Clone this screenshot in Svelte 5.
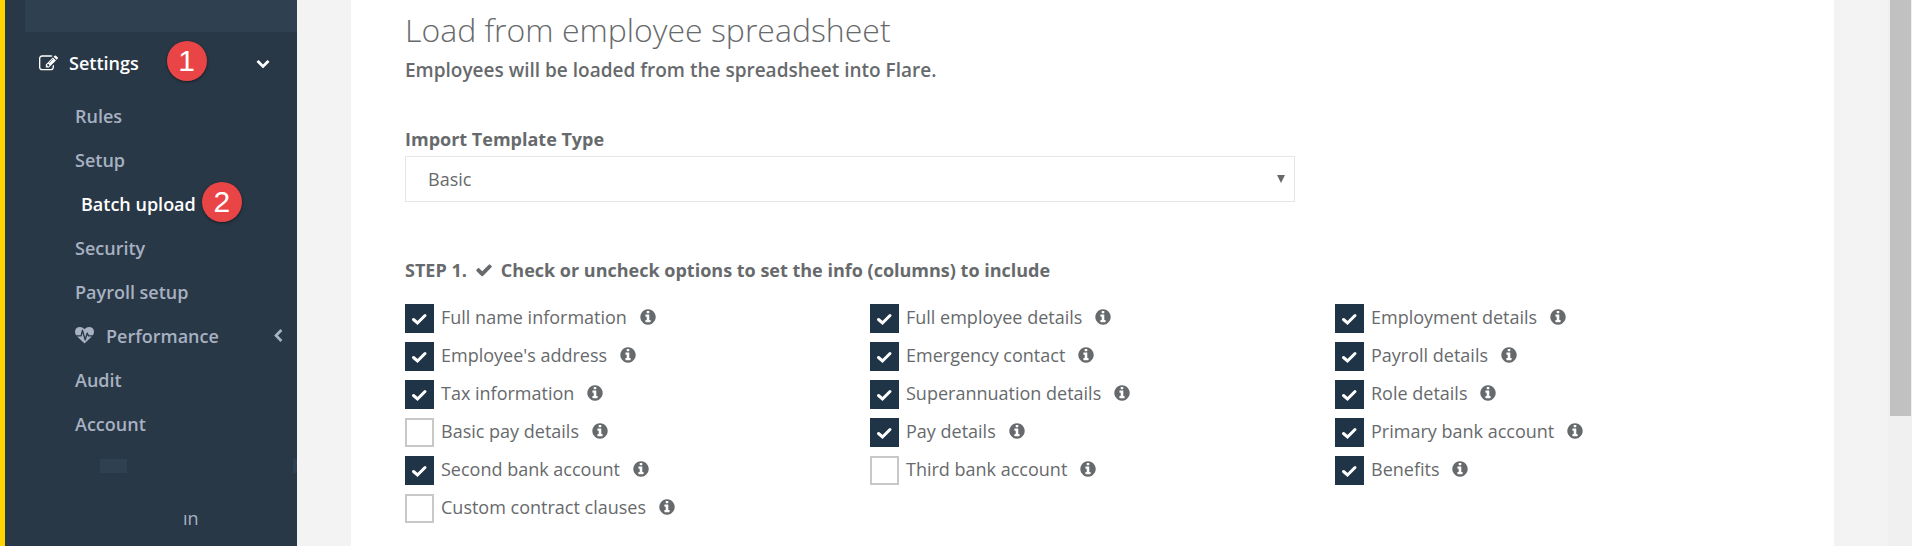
<script>
  const icons = {
    edit:
      "M888 1184l116-116-152-152-116 116v56h96v96h56zm440-720q-16-16-33 1l-350 350q-17 17-1 33t33-1l350-350q17-17 1-33zm80 594v190q0 119-84.5 203.5t-203.5 84.5h-832q-119 0-203.5-84.5t-84.5-203.5v-832q0-119 84.5-203.5t203.5-84.5h832q63 0 117 25 15 7 18 23 3 17-9 29l-49 49q-14 14-32 8-23-6-45-6h-832q-66 0-113 47t-47 113v832q0 66 47 113t113 47h832q66 0 113-47t47-113v-126q0-13 9-22l64-64q15-15 35-7t20 29zm-96-738l288 288-672 672h-288v-288zm444 132l-92 92-288-288 92-92q28-28 68-28t68 28l152 152q28 28 28 68t-28 68z",
    heart:
      "M1280 896h305q-5 6-10 10.5t-9 7.5l-3 4-623 600q-18 18-44 18t-44-18l-624-602q-5-2-21-20h369q22 0 39.5-13.5t22.5-34.5l70-281 190 667q6 20 23 33t39 13q21 0 38-13t23-33l146-485 56 112q18 35 57 35zm512-428q0 145-103 300h-369l-111-221q-8-17-25.5-27t-36.5-8q-45 5-56 46l-129 430-196-686q-6-20-23.5-33t-39.5-13-39 13.5-22 34.5l-116 464h-423q-103-155-103-300 0-220 127-344t351-124q62 0 126.5 21.5t120 58 95.5 68.5 76 68q36-36 76-68t95.5-68.5 120-58 126.5-21.5q224 0 351 124t127 344z",
    down:
      "M1683 808l-742 741q-19 19-45 19t-45-19l-742-741q-19-19-19-45.5t19-45.5l166-165q19-19 45-19t45 19l531 531 531-531q19-19 45-19t45 19l166 165q19 19 19 45.5t-19 45.5z",
    left:
      "M1427 301l-531 531 531 531q19 19 19 45t-19 45l-166 166q-19 19-45 19t-45-19l-742-742q-19-19-19-45t19-45l742-742q19-19 45-19t45 19l166 166q19 19 19 45t-19 45z",
    check:
      "M1671 566q0 40-28 68l-724 724-136 136q-28 28-68 28t-68-28l-136-136-362-362q-28-28-28-68t28-68l136-136q28-28 68-28t68 28l294 295 656-657q28-28 68-28t68 28l136 136q28 28 28 68z",
    info:
      "M1152 1376v-160q0-14-9-23t-23-9h-96v-512q0-14-9-23t-23-9h-320q-14 0-23 9t-9 23v160q0 14 9 23t23 9h96v320h-96q-14 0-23 9t-9 23v160q0 14 9 23t23 9h448q14 0 23-9t9-23zm-128-896v-160q0-14-9-23t-23-9h-192q-14 0-23 9t-9 23v160q0 14 9 23t23 9h192q14 0 23-9t9-23zm640 416q0 209-103 385.5t-279.5 279.5-385.5 103-385.5-103-279.5-279.5-103-385.5 103-385.5 279.5-279.5 385.5-103 385.5 103 279.5 279.5 103 385.5z"
  };

  const links = [
    { text: "Rules" },
    { text: "Setup" },
    { text: "Batch upload", active: true, badge: 2 },
    { text: "Security" },
    { text: "Payroll setup" },
    { text: "Performance", icon: "heart", more: true },
    { text: "Audit" },
    { text: "Account" }
  ];

  let template = "Basic";

  // read row by row, three per row
  let options = [
    { text: "Full name information", checked: true },
    { text: "Full employee details", checked: true },
    { text: "Employment details", checked: true },
    { text: "Employee's address", checked: true },
    { text: "Emergency contact", checked: true },
    { text: "Payroll details", checked: true },
    { text: "Tax information", checked: true },
    { text: "Superannuation details", checked: true },
    { text: "Role details", checked: true },
    { text: "Basic pay details", checked: false },
    { text: "Pay details", checked: true },
    { text: "Primary bank account", checked: true },
    { text: "Second bank account", checked: true },
    { text: "Third bank account", checked: false },
    { text: "Benefits", checked: true },
    { text: "Custom contract clauses", checked: false }
  ];
</script>

<style>
  :global(body) {
    background: #f3f3f4;
  }

  .page {
    display: flex;
    min-height: 100vh;
    box-sizing: border-box;
    border-left: 5px solid #ffd400;
    font-family: "Open Sans", sans-serif;
    font-size: 18px;
    line-height: 24px;
    color: #676a6c;
  }

  svg {
    display: block;
    flex: none;
    width: 18px;
    height: 18px;
    fill: currentColor;
  }

  /* sidebar */
  nav {
    flex: none;
    width: 292px;
    background: #293846;
    color: #a7b1c2;
    font-weight: 600;
  }
  .previous {
    height: 32px;
    margin-left: 20px;
    background: #2f4050;
  }
  nav a {
    display: flex;
    align-items: center;
    color: inherit;
    text-decoration: none;
  }
  .parent {
    height: 62px;
    padding: 0 27px 0 34px;
    color: #fff;
  }
  .parent svg {
    width: 19px;
    height: 19px;
    margin-right: 11px;
  }
  nav ul {
    margin: 0;
    padding: 0;
    list-style: none;
  }
  li a {
    height: 44px;
    padding: 0 12px 0 70px;
  }
  li a.active {
    padding-left: 76px;
    color: #fff;
  }
  li svg {
    width: 19px;
    height: 19px;
    margin-right: 12px;
  }
  nav .arrow {
    width: 14px;
    height: 14px;
    margin: 0 0 0 auto;
  }
  .anchor {
    position: relative;
  }
  .badge {
    position: absolute;
    top: 50%;
    left: 100%;
    width: 40px;
    height: 40px;
    margin: -22px 0 0 6px;
    border-radius: 50%;
    background: #e94547;
    box-shadow: 0 1px 3px rgba(0, 0, 0, 0.5);
    color: #fff;
    font: 30px/40px "Liberation Sans", sans-serif;
    text-align: center;
  }
  .parent .badge {
    margin-left: 28px;
  }
  .remains {
    display: flex;
    justify-content: space-between;
    margin-top: 13px;
    padding-left: 95px;
  }
  .remains span {
    width: 27px;
    height: 14px;
    background: #2f4050;
  }
  .remains span:last-child {
    width: 4px;
  }
  .tail {
    margin: 33px 0 0 178px;
    font-weight: 400;
  }

  /* content */
  main {
    flex: 1;
    margin: 0 54px;
    padding: 10px 74px 0 54px;
    background: #fff;
  }
  h2 {
    margin: 0;
    font-size: 32px;
    font-weight: 300;
    line-height: 40px;
  }
  .lead {
    margin: 8px 0 0;
    font-size: 19px;
    font-weight: 600;
    line-height: 24px;
  }
  .field {
    display: grid;
    grid-template-columns: repeat(3, 1fr);
    column-gap: 40px;
    row-gap: 5px;
    margin-top: 45px;
  }
  .field label {
    grid-column: 1 / -1;
    font-weight: 700;
  }
  .select {
    display: grid;
    grid-column: span 2;
    align-items: center;
  }
  select {
    grid-area: 1 / 1;
    appearance: none;
    height: 46px;
    padding: 0 22px;
    border: 1px solid #e5e6e7;
    border-radius: 0;
    background: #fff;
    color: inherit;
    font: inherit;
  }
  .select svg {
    grid-area: 1 / 1;
    justify-self: end;
    width: 8px;
    height: 8px;
    margin-right: 10px;
    pointer-events: none;
  }
  h4 {
    display: flex;
    align-items: center;
    gap: 8px;
    margin: 56px 0 22px;
    font-size: 18px;
    font-weight: 700;
    line-height: 24px;
  }
  .options {
    display: grid;
    grid-template-columns: repeat(3, 1fr);
    gap: 9px 40px;
  }
  .option {
    display: flex;
    align-items: flex-start;
    height: 29px;
    line-height: 26px;
  }
  .option label {
    display: flex;
    align-items: flex-start;
  }
  .box {
    display: grid;
    margin-right: 7px;
  }
  .box input {
    grid-area: 1 / 1;
    appearance: none;
    box-sizing: border-box;
    width: 29px;
    height: 29px;
    margin: 0;
    border: 2px solid #c8c8c8;
    background: #fff;
  }
  .box input:checked {
    border-color: #1f3547;
    background: #1f3547;
  }
  .box svg {
    grid-area: 1 / 1;
    width: 29px;
    height: 29px;
    fill: none;
    stroke: #fff;
    stroke-width: 3;
    stroke-linecap: round;
    pointer-events: none;
  }
  .option button {
    all: unset;
    margin: 4px 0 0 12px;
    cursor: pointer;
  }

  /* scrollbar */
  .scrollbar {
    flex: none;
    width: 21px;
    padding: 0 1px 0 2px;
    background: #f0f0f0;
  }
  .thumb {
    height: 416px;
    background: #c1c1c1;
  }
</style>

{#snippet icon(name)}
  <svg viewBox="0 0 1792 1792" aria-hidden="true"><path d={icons[name]} /></svg>
{/snippet}

<div class="page">
  <nav>
    <div class="previous"></div>
    <a class="parent" href="#settings">
      {@render icon("edit")}
      <span class="anchor">Settings<span class="badge">1</span></span>
      <svg class="arrow" viewBox="0 0 1792 1792"><path d={icons.down} /></svg>
    </a>
    <ul>
      {#each links as link}
        <li>
          <a href="#{link.text}" class:active={link.active}>
            {#if link.icon}{@render icon(link.icon)}{/if}
            <span class="anchor">
              {link.text}{#if link.badge}<span class="badge">{link.badge}</span>{/if}
            </span>
            {#if link.more}
              <svg class="arrow" viewBox="0 0 1792 1792"><path d={icons.left} /></svg>
            {/if}
          </a>
        </li>
      {/each}
    </ul>
    <div class="remains"><span></span><span></span></div>
    <div class="tail">ın</div>
  </nav>

  <main>
    <h2>Load from employee spreadsheet</h2>
    <p class="lead">Employees will be loaded from the spreadsheet into Flare.</p>

    <div class="field">
      <label for="template">Import Template Type</label>
      <div class="select">
        <select id="template" bind:value={template}>
          <option>Basic</option>
        </select>
        <svg viewBox="0 0 8 8" aria-hidden="true"><path d="M0 0h8L4 8z" /></svg>
      </div>
    </div>

    <h4>
      <span>STEP 1.</span>
      {@render icon("check")}
      <span>Check or uncheck options to set the info (columns) to include</span>
    </h4>

    <div class="options">
      {#each options as option}
        <div class="option">
          <label>
            <span class="box">
              <input type="checkbox" bind:checked={option.checked} />
              {#if option.checked}
                <svg viewBox="0 0 29 29" aria-hidden="true">
                  <path d="M8.5 15.5L12.5 19L20 11.5" />
                </svg>
              {/if}
            </span>
            {option.text}
          </label>
          <button aria-label="About {option.text}">{@render icon("info")}</button>
        </div>
      {/each}
    </div>
  </main>

  <div class="scrollbar"><div class="thumb"></div></div>
</div>
